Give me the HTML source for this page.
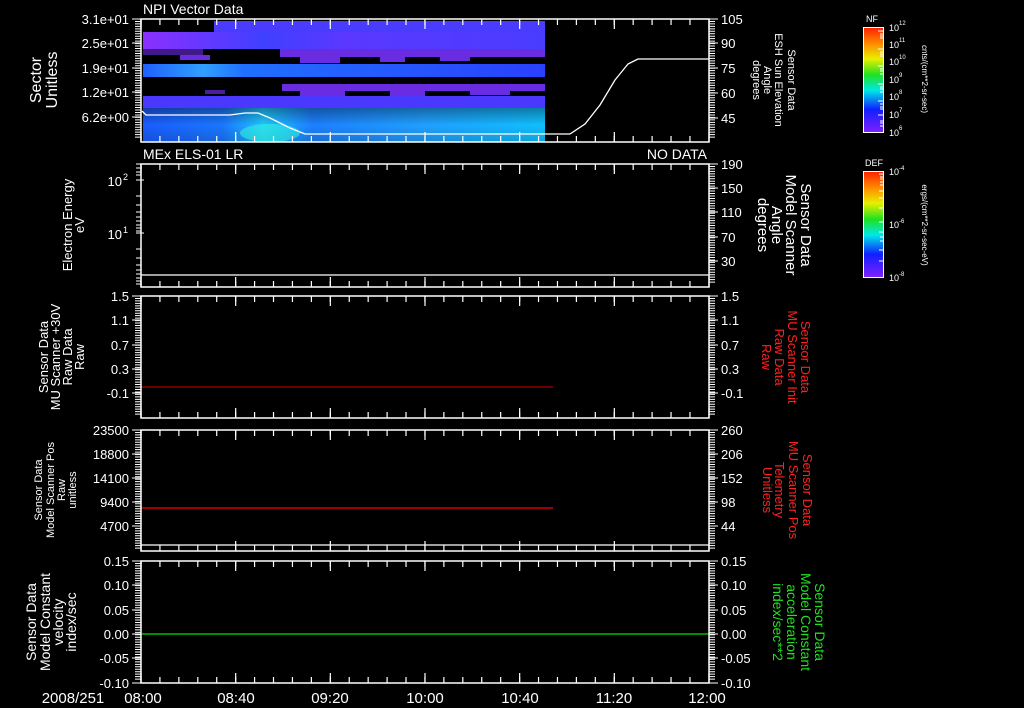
<!DOCTYPE html>
<html><head><meta charset="utf-8"><style>
html,body{margin:0;padding:0;background:#000;}
svg{display:block;}
text{font-family:"Liberation Sans",sans-serif;fill:#fff;}
</style></head><body>
<svg width="1024" height="708" viewBox="0 0 1024 708" xmlns="http://www.w3.org/2000/svg">
<defs>
<linearGradient id="rb" x1="0" y1="0" x2="0" y2="1">
<stop offset="0" stop-color="#ff2000"/><stop offset="0.15" stop-color="#ff8800"/><stop offset="0.3" stop-color="#e8f000"/><stop offset="0.45" stop-color="#20e020"/><stop offset="0.6" stop-color="#00e8e8"/><stop offset="0.78" stop-color="#1020ff"/><stop offset="1" stop-color="#8020ff"/>
</linearGradient>
<linearGradient id="bH" x1="0" y1="0" x2="1" y2="0">
<stop offset="0" stop-color="#1a5cff"/><stop offset="0.2" stop-color="#1a78ff"/><stop offset="0.3" stop-color="#20c8ff"/><stop offset="0.42" stop-color="#1c80ff"/><stop offset="0.7" stop-color="#20a0ff"/><stop offset="1" stop-color="#10c0ff"/>
</linearGradient>
<linearGradient id="bH2" x1="0" y1="0" x2="0" y2="1">
<stop offset="0" stop-color="#000" stop-opacity="0.35"/><stop offset="0.5" stop-color="#000" stop-opacity="0"/><stop offset="1" stop-color="#000" stop-opacity="0.15"/>
</linearGradient>
<linearGradient id="bD" x1="0" y1="0" x2="1" y2="0">
<stop offset="0" stop-color="#2060ff"/><stop offset="0.15" stop-color="#30a0ff"/><stop offset="0.25" stop-color="#2070ff"/><stop offset="1" stop-color="#2a40ff"/>
</linearGradient>
<linearGradient id="bB" x1="0" y1="0" x2="1" y2="0">
<stop offset="0" stop-color="#8a30ff"/><stop offset="0.3" stop-color="#4040ff"/><stop offset="0.5" stop-color="#5a38ff"/><stop offset="1" stop-color="#4a3cff"/>
</linearGradient>
<g id="tt" stroke="#fff" stroke-width="1.2" fill="none">
<path d="M141 0v6m18.93-6v6m18.93-6v6m18.93-6v6m18.93-6v6m18.93-6v6m18.93-6v6m18.93-6v6m18.93-6v6m18.93-6v6m18.93-6v6m18.93-6v6m18.93-6v6m18.93-6v6m18.93-6v6m18.93-6v6m18.93-6v6m18.93-6v6m18.93-6v6m18.93-6v6m18.93-6v6m18.93-6v6m18.93-6v6m18.93-6v6m18.93-6v6m18.93-6v6m18.93-6v6m18.93-6v6m18.93-6v6m18.93-6v6"/>
<path d="M141 0v10M235.67 0v10M330.33 0v10M425 0v10M519.67 0v10M614.33 0v10M709 0v10"/>
</g>
<path id="yt" stroke="#fff" stroke-width="1" fill="none" d="M0 0h6m-6 2.46h6m-6 2.46h6m-6 2.46h6m-6 2.46h6m-6 2.46h6m-6 2.46h6m-6 2.46h6m-6 2.46h6m-6 2.46h6m-6 2.46h6m-6 2.46h6m-6 2.46h6m-6 2.46h6m-6 2.46h6m-6 2.46h6m-6 2.46h6m-6 2.46h6m-6 2.46h6m-6 2.46h6m-6 2.46h6m-6 2.46h6m-6 2.46h6m-6 2.46h6m-6 2.46h6m-6 2.46h6m-6 2.46h6m-6 2.46h6m-6 2.46h6m-6 2.46h6m-6 2.46h6m-6 2.46h6m-6 2.46h6m-6 2.46h6m-6 2.46h6m-6 2.46h6m-6 2.46h6m-6 2.46h6m-6 2.46h6m-6 2.46h6m-6 2.46h6m-6 2.46h6m-6 2.46h6m-6 2.46h6m-6 2.46h6m-6 2.46h6m-6 2.46h6m-6 2.46h6m-6 2.46h6"/>
</defs>

<!-- Panel 1 spectrogram -->
<rect x="214" y="21" width="331" height="11" fill="#4a3cff"/>
<rect x="143" y="32" width="402" height="17" fill="url(#bB)"/>
<g fill="#6a2ce0">
<rect x="143" y="49" width="60" height="6" opacity="0.6"/><rect x="180" y="55" width="30" height="5"/>
<rect x="280" y="49" width="265" height="8"/><rect x="300" y="57" width="40" height="6"/><rect x="380" y="57" width="25" height="5"/><rect x="440" y="57" width="30" height="4"/>
<rect x="282" y="84" width="263" height="7"/><rect x="300" y="91" width="45" height="5"/><rect x="390" y="91" width="35" height="5"/><rect x="470" y="91" width="40" height="4"/>
<rect x="205" y="90" width="20" height="4" opacity="0.7"/>
</g>
<rect x="143" y="64" width="402" height="13" fill="url(#bD)"/>
<rect x="143" y="96" width="402" height="12" fill="#4a38ff"/>
<rect x="143" y="108" width="402" height="34" fill="url(#bH)"/>
<rect x="143" y="108" width="402" height="34" fill="url(#bH2)"/>
<ellipse cx="270" cy="133" rx="30" ry="9" fill="#30f0e0" opacity="0.6"/>
<polyline points="142,111 146,115 230,115 245,113 258,113 270,118 290,128 305,134 570,134 585,124 600,105 615,80 628,64 638,59 709,59" fill="none" stroke="#fff" stroke-width="1.3"/>

<!-- lines -->
<line x1="141" y1="275" x2="709" y2="275" stroke="#fff" stroke-width="1.3"/>
<line x1="141" y1="387" x2="553" y2="387" stroke="#d00000" stroke-width="1"/>
<line x1="141" y1="545" x2="709" y2="545" stroke="#fff" stroke-width="1.3"/>
<line x1="141" y1="508" x2="553" y2="508" stroke="#ff0000" stroke-width="1.3"/>
<line x1="141" y1="634" x2="709" y2="634" stroke="#00e000" stroke-width="1.3"/>

<!-- panels frames -->
<g fill="none" stroke="#fff" stroke-width="1.5">
<rect x="141" y="19" width="568" height="123"/>
<rect x="141" y="164" width="568" height="123"/>
<rect x="141" y="296" width="568" height="122"/>
<rect x="141" y="430" width="568" height="121"/>
<rect x="141" y="561" width="568" height="122"/>
</g>
<!-- time ticks -->
<use href="#tt" transform="translate(0,19)"/><use href="#tt" transform="translate(0,142) scale(1,-1)"/>
<use href="#tt" transform="translate(0,164)"/><use href="#tt" transform="translate(0,287) scale(1,-1)"/>
<use href="#tt" transform="translate(0,296)"/><use href="#tt" transform="translate(0,418) scale(1,-1)"/>
<use href="#tt" transform="translate(0,430)"/><use href="#tt" transform="translate(0,551) scale(1,-1)"/>
<use href="#tt" transform="translate(0,561)"/><use href="#tt" transform="translate(0,683) scale(1,-1)"/>
<!-- y minor ticks -->
<use href="#yt" transform="translate(135,19)"/><use href="#yt" transform="translate(709,19)"/>
<use href="#yt" transform="translate(709,164)"/>
<use href="#yt" transform="translate(135,296)"/><use href="#yt" transform="translate(709,296)"/>
<use href="#yt" transform="translate(135,430)"/><use href="#yt" transform="translate(709,430)"/>
<use href="#yt" transform="translate(135,561)"/><use href="#yt" transform="translate(709,561)"/>
<g stroke="#fff" stroke-width="1">
<path d="M136 164h5M136 168h5M136 172h5M136 175h5M136 180h8M136 196h5M136 205h5M136 212h5M136 217h5M136 221h5M136 225h5M136 228h5M136 231h5M136 233h8M136 249h5M136 258h5M136 265h5M136 270h5M136 274h5M136 278h5M136 281h5M136 284h5"/>
<path d="M132 19h9M132 43h9M132 68h9M132 92h9M132 117h9M709 19h9M709 43h9M709 68h9M709 93h9M709 118h9M709 164h9M709 188h9M709 212h9M709 237h9M709 261h9"/>
<path d="M132 296h9M132 320h9M132 345h9M132 369h9M132 393h9M709 296h9M709 320h9M709 345h9M709 369h9M709 393h9"/>
<path d="M132 430h9M132 454h9M132 478h9M132 502h9M132 526h9M709 430h9M709 454h9M709 478h9M709 502h9M709 526h9"/>
<path d="M132 561h9M132 585h9M132 610h9M132 634h9M132 658h9M132 683h9M709 561h9M709 585h9M709 610h9M709 634h9M709 658h9M709 683h9"/>
</g>

<!-- titles -->
<text x="143" y="14" font-size="14">NPI Vector Data</text>
<text x="143" y="159" font-size="14">MEx ELS-01 LR</text>
<text x="707" y="159" font-size="14" text-anchor="end">NO DATA</text>

<!-- left tick labels -->
<g font-size="13" text-anchor="end">
<text x="129" y="24">3.1e+01</text><text x="129" y="48">2.5e+01</text><text x="129" y="73">1.9e+01</text><text x="129" y="97">1.2e+01</text><text x="129" y="122">6.2e+00</text>
<text x="122" y="186">10</text><text x="122" y="239">10</text>
<text x="129" y="301">1.5</text><text x="129" y="325">1.1</text><text x="129" y="350">0.7</text><text x="129" y="374">0.3</text><text x="129" y="398">-0.1</text>
<text x="129" y="435">23500</text><text x="129" y="459">18800</text><text x="129" y="483">14100</text><text x="129" y="507">9400</text><text x="129" y="531">4700</text>
<text x="129" y="566">0.15</text><text x="129" y="590">0.10</text><text x="129" y="615">0.05</text><text x="129" y="639">0.00</text><text x="129" y="663">-0.05</text><text x="129" y="688">-0.10</text>
</g>
<g font-size="9"><text x="123" y="180">2</text><text x="123" y="233">1</text></g>
<!-- right tick labels -->
<g font-size="13">
<text x="721" y="24">105</text><text x="721" y="48">90</text><text x="721" y="73">75</text><text x="721" y="98">60</text><text x="721" y="123">45</text>
<text x="721" y="169">190</text><text x="721" y="193">150</text><text x="721" y="217">110</text><text x="721" y="242">70</text><text x="721" y="266">30</text>
<text x="721" y="301">1.5</text><text x="721" y="325">1.1</text><text x="721" y="350">0.7</text><text x="721" y="374">0.3</text><text x="721" y="398">-0.1</text>
<text x="721" y="435">260</text><text x="721" y="459">206</text><text x="721" y="483">152</text><text x="721" y="507">98</text><text x="721" y="531">44</text>
<text x="721" y="566">0.15</text><text x="721" y="590">0.10</text><text x="721" y="615">0.05</text><text x="721" y="639">0.00</text><text x="721" y="663">-0.05</text><text x="721" y="688">-0.10</text>
</g>

<!-- time labels -->
<g font-size="15" text-anchor="middle">
<text x="73" y="703">2008/251</text>
<text x="143" y="703">08:00</text><text x="236" y="703">08:40</text><text x="330" y="703">09:20</text><text x="425" y="703">10:00</text><text x="520" y="703">10:40</text><text x="614" y="703">11:20</text><text x="707" y="703">12:00</text>
</g>

<!-- left rotated labels -->
<g text-anchor="middle">
<g font-size="16"><text transform="translate(41,80) rotate(-90)">Sector</text><text transform="translate(57,80) rotate(-90)">Unitless</text></g>
<g font-size="13"><text transform="translate(72,225) rotate(-90)">Electron Energy</text><text transform="translate(84,225) rotate(-90)">eV</text></g>
<g font-size="13"><text transform="translate(48,357) rotate(-90)">Sensor Data</text><text transform="translate(60,357) rotate(-90)">MU Scanner +30V</text><text transform="translate(72,357) rotate(-90)">Raw Data</text><text transform="translate(84,357) rotate(-90)">Raw</text></g>
<g font-size="11"><text transform="translate(42,490) rotate(-90)">Sensor Data</text><text transform="translate(54,490) rotate(-90)">Model Scanner Pos</text><text transform="translate(65,490) rotate(-90)">Raw</text><text transform="translate(76,490) rotate(-90)">unitless</text></g>
<g font-size="14"><text transform="translate(36,622) rotate(-90)">Sensor Data</text><text transform="translate(50,622) rotate(-90)">Model Constant</text><text transform="translate(63,622) rotate(-90)">velocity</text><text transform="translate(76,622) rotate(-90)">index/sec</text></g>
</g>

<!-- right rotated labels -->
<g text-anchor="middle">
<g font-size="11"><text transform="translate(788,80) rotate(90)">Sensor Data</text><text transform="translate(775,80) rotate(90)">ESH Sun Elevation</text><text transform="translate(764,80) rotate(90)">Angle</text><text transform="translate(753,80) rotate(90)">degrees</text></g>
<g font-size="15"><text transform="translate(801,225) rotate(90)">Sensor Data</text><text transform="translate(786,225) rotate(90)">Model Scanner</text><text transform="translate(772,225) rotate(90)">Angle</text><text transform="translate(758,225) rotate(90)">degrees</text></g>
<g font-size="13"><text transform="translate(801,357) rotate(90)" style="fill:#ff2020">Sensor Data</text><text transform="translate(788,357) rotate(90)" style="fill:#ff2020">MU Scanner Init</text><text transform="translate(775,357) rotate(90)" style="fill:#ff2020">Raw Data</text><text transform="translate(762,357) rotate(90)" style="fill:#ff2020">Raw</text></g>
<g font-size="13"><text transform="translate(803,490) rotate(90)" style="fill:#ff2020">Sensor Data</text><text transform="translate(789,490) rotate(90)" style="fill:#ff2020">MU Scanner Pos</text><text transform="translate(775,490) rotate(90)" style="fill:#ff2020">Telemetry</text><text transform="translate(763,490) rotate(90)" style="fill:#ff2020">Unitless</text></g>
<g font-size="14"><text transform="translate(815,622) rotate(90)" style="fill:#20e020">Sensor Data</text><text transform="translate(801,622) rotate(90)" style="fill:#20e020">Model Constant</text><text transform="translate(787,622) rotate(90)" style="fill:#20e020">acceleration</text><text transform="translate(773,622) rotate(90)" style="fill:#20e020">index/sec**2</text></g>
</g>

<!-- colour bars -->
<rect x="863.5" y="27.5" width="20" height="105" fill="url(#rb)" stroke="#fff" stroke-width="1"/>
<rect x="863.5" y="171.5" width="20" height="106" fill="url(#rb)" stroke="#fff" stroke-width="1"/>
<g stroke="#fff" stroke-width="1">
<path d="M878 31h5M880 34h3M880 36h3M880 38h3M878 49h5M880 52h3M880 54h3M880 56h3M878 66h5M880 69h3M880 71h3M880 74h3M878 84h5M880 87h3M880 89h3M880 92h3M878 101h5M880 104h3M880 107h3M880 109h3M878 115h5M880 121h3M880 123h3M880 126h3"/>
<path d="M879 174h4M880 177h3M880 179h3M880 182h3M880 185h3M879 191h4M879 198h4M879 208h4M879 222h4M879 232h4M880 237h3M880 241h3M879 250h4M879 261h4"/>
</g>
<g font-size="9"><text x="866" y="22">NF</text><text x="865" y="166">DEF</text></g>
<g font-size="9">
<text x="889" y="31">10</text><text x="889" y="48">10</text><text x="889" y="65">10</text><text x="889" y="83">10</text><text x="889" y="100">10</text><text x="889" y="118">10</text><text x="889" y="136">10</text>
<text x="889" y="175">10</text><text x="889" y="228">10</text><text x="889" y="281">10</text>
</g>
<g font-size="6"><text x="899" y="25">12</text><text x="899" y="42">11</text><text x="899" y="59">10</text><text x="899" y="77">9</text><text x="899" y="94">8</text><text x="899" y="112">7</text><text x="899" y="130">6</text>
<text x="899" y="170">-4</text><text x="899" y="223">-6</text><text x="899" y="276">-8</text></g>
<g font-size="8" text-anchor="middle"><text transform="translate(922,79) rotate(90)">cnts/(cm**2-sr-sec)</text><text transform="translate(922,225) rotate(90)">ergs/(cm**2-sr-sec-eV)</text></g>
</svg>
</body></html>
